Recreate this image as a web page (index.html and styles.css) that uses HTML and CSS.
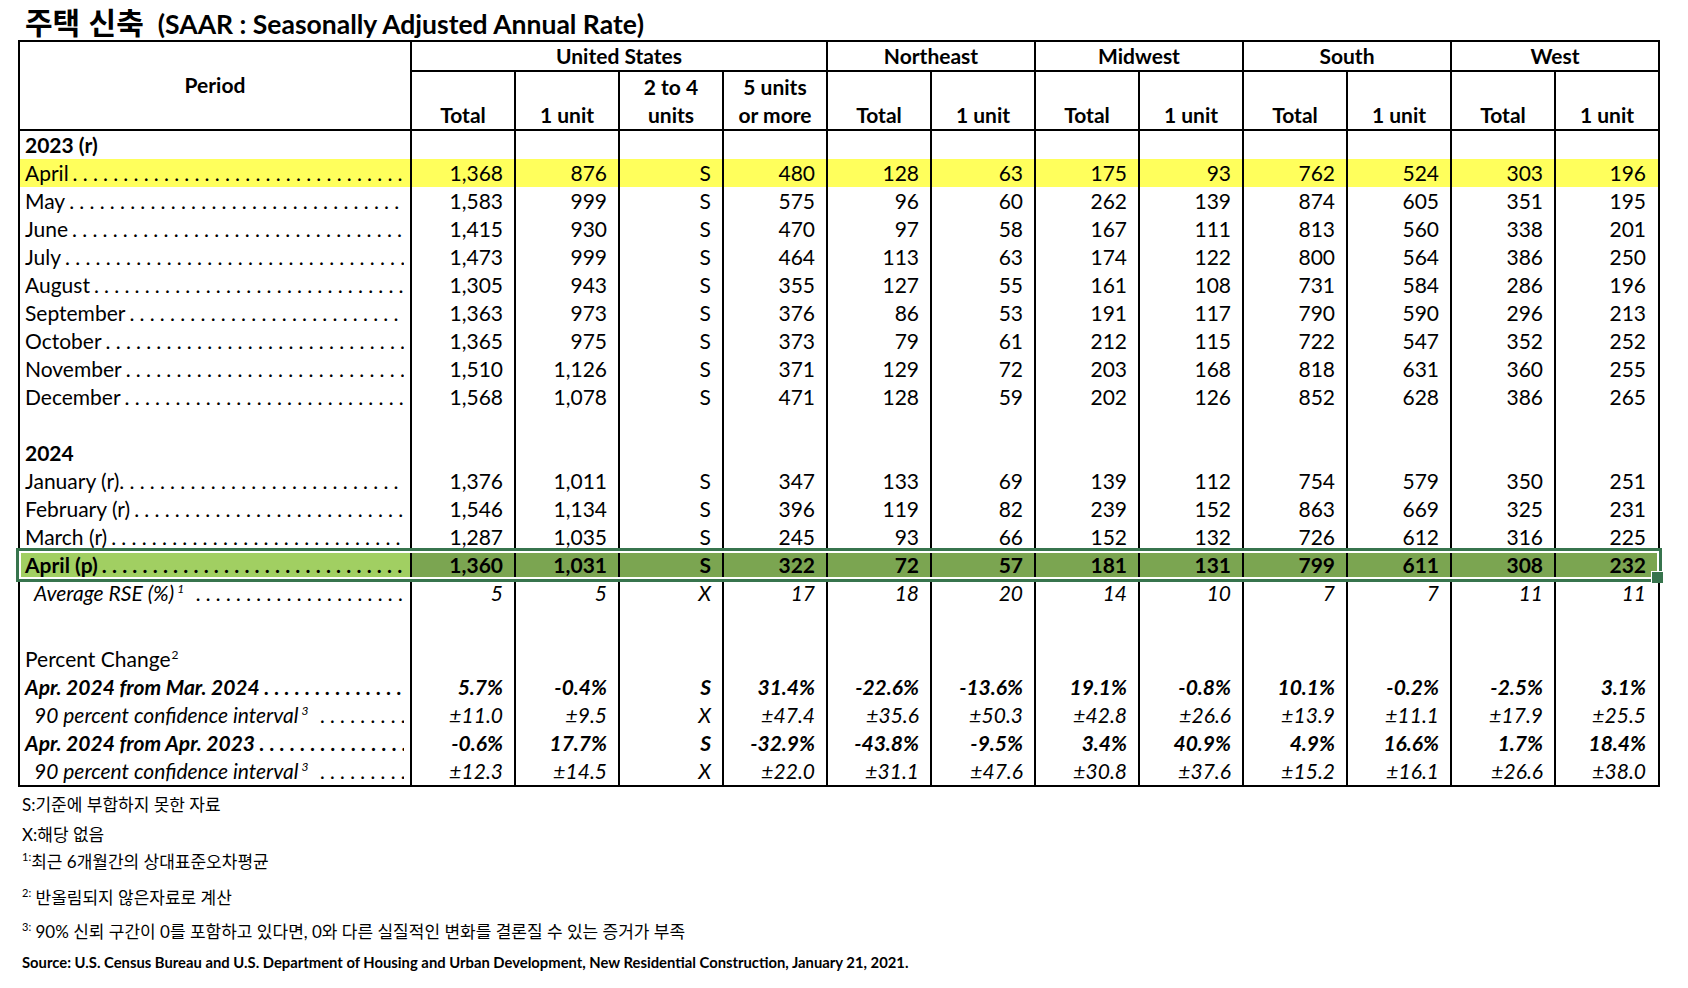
FILE: index.html
```html
<!DOCTYPE html>
<html lang="ko">
<head>
<meta charset="utf-8">
<title>주택 신축</title>
<link rel="stylesheet" href="styles.css">
</head>
<body>
<div class="page">
  <div class="title"><span class="ko">주택 신축</span><span class="en">(SAAR : Seasonally Adjusted Annual Rate)</span></div>

  <div class="sheet">
    <div class="head">
      <div class="period">Period</div>
      <div class="grp g4">United States</div>
      <div class="grp g2">Northeast</div>
      <div class="grp g2">Midwest</div>
      <div class="grp g2">South</div>
      <div class="grp g2 last">West</div>
      <div class="sub">Total</div>
      <div class="sub">1 unit</div>
      <div class="sub">2 to 4<br>units</div>
      <div class="sub">5 units<br>or more</div>
      <div class="sub">Total</div>
      <div class="sub">1 unit</div>
      <div class="sub">Total</div>
      <div class="sub">1 unit</div>
      <div class="sub">Total</div>
      <div class="sub">1 unit</div>
      <div class="sub">Total</div>
      <div class="sub last">1 unit</div>
    </div>

    <div class="row"><div class="lab b">2023 (r)</div><div></div><div></div><div></div><div></div><div></div><div></div><div></div><div></div><div></div><div></div><div></div><div></div></div>
    <div class="row hl"><div class="lab"><span>April</span><span class="dots">............................................................</span></div><div>1,368</div><div>876</div><div>S</div><div>480</div><div>128</div><div>63</div><div>175</div><div>93</div><div>762</div><div>524</div><div>303</div><div>196</div></div>
    <div class="row"><div class="lab"><span>May</span><span class="dots">............................................................</span></div><div>1,583</div><div>999</div><div>S</div><div>575</div><div>96</div><div>60</div><div>262</div><div>139</div><div>874</div><div>605</div><div>351</div><div>195</div></div>
    <div class="row"><div class="lab"><span>June</span><span class="dots">............................................................</span></div><div>1,415</div><div>930</div><div>S</div><div>470</div><div>97</div><div>58</div><div>167</div><div>111</div><div>813</div><div>560</div><div>338</div><div>201</div></div>
    <div class="row"><div class="lab"><span>July</span><span class="dots">............................................................</span></div><div>1,473</div><div>999</div><div>S</div><div>464</div><div>113</div><div>63</div><div>174</div><div>122</div><div>800</div><div>564</div><div>386</div><div>250</div></div>
    <div class="row"><div class="lab"><span>August</span><span class="dots">............................................................</span></div><div>1,305</div><div>943</div><div>S</div><div>355</div><div>127</div><div>55</div><div>161</div><div>108</div><div>731</div><div>584</div><div>286</div><div>196</div></div>
    <div class="row"><div class="lab"><span>September</span><span class="dots">............................................................</span></div><div>1,363</div><div>973</div><div>S</div><div>376</div><div>86</div><div>53</div><div>191</div><div>117</div><div>790</div><div>590</div><div>296</div><div>213</div></div>
    <div class="row"><div class="lab"><span>October</span><span class="dots">............................................................</span></div><div>1,365</div><div>975</div><div>S</div><div>373</div><div>79</div><div>61</div><div>212</div><div>115</div><div>722</div><div>547</div><div>352</div><div>252</div></div>
    <div class="row"><div class="lab"><span>November</span><span class="dots">............................................................</span></div><div>1,510</div><div>1,126</div><div>S</div><div>371</div><div>129</div><div>72</div><div>203</div><div>168</div><div>818</div><div>631</div><div>360</div><div>255</div></div>
    <div class="row"><div class="lab"><span>December</span><span class="dots">............................................................</span></div><div>1,568</div><div>1,078</div><div>S</div><div>471</div><div>128</div><div>59</div><div>202</div><div>126</div><div>852</div><div>628</div><div>386</div><div>265</div></div>
    <div class="row"><div class="lab"></div><div></div><div></div><div></div><div></div><div></div><div></div><div></div><div></div><div></div><div></div><div></div><div></div></div>
    <div class="row"><div class="lab b">2024</div><div></div><div></div><div></div><div></div><div></div><div></div><div></div><div></div><div></div><div></div><div></div><div></div></div>
    <div class="row"><div class="lab"><span>January (r)</span><span class="dots tight">............................................................</span></div><div>1,376</div><div>1,011</div><div>S</div><div>347</div><div>133</div><div>69</div><div>139</div><div>112</div><div>754</div><div>579</div><div>350</div><div>251</div></div>
    <div class="row"><div class="lab"><span>February (r)</span><span class="dots">............................................................</span></div><div>1,546</div><div>1,134</div><div>S</div><div>396</div><div>119</div><div>82</div><div>239</div><div>152</div><div>863</div><div>669</div><div>325</div><div>231</div></div>
    <div class="row"><div class="lab"><span>March (r)</span><span class="dots">............................................................</span></div><div>1,287</div><div>1,035</div><div>S</div><div>245</div><div>93</div><div>66</div><div>152</div><div>132</div><div>726</div><div>612</div><div>316</div><div>225</div></div>
    <div class="row sel"><div class="lab"><span>April (p)</span><span class="dots">............................................................</span></div><div>1,360</div><div>1,031</div><div>S</div><div>322</div><div>72</div><div>57</div><div>181</div><div>131</div><div>799</div><div>611</div><div>308</div><div>232</div></div>
    <div class="row it"><div class="lab ind"><span>Average RSE (%)<sup class="sup">1</sup></span><span class="dots wide">............................................................</span></div><div>5</div><div>5</div><div>X</div><div>17</div><div>18</div><div>20</div><div>14</div><div>10</div><div>7</div><div>7</div><div>11</div><div>11</div></div>
    <div class="row tall"><div class="lab"></div><div></div><div></div><div></div><div></div><div></div><div></div><div></div><div></div><div></div><div></div><div></div><div></div></div>
    <div class="row"><div class="lab"><span>Percent Change<sup class="sup tight">2</sup></span></div><div></div><div></div><div></div><div></div><div></div><div></div><div></div><div></div><div></div><div></div><div></div><div></div></div>
    <div class="row bi"><div class="lab"><span>Apr. 2024 from Mar. 2024</span><span class="dots">............................................................</span></div><div>5.7%</div><div>-0.4%</div><div>S</div><div>31.4%</div><div>-22.6%</div><div>-13.6%</div><div>19.1%</div><div>-0.8%</div><div>10.1%</div><div>-0.2%</div><div>-2.5%</div><div>3.1%</div></div>
    <div class="row it"><div class="lab ind"><span>90 percent confidence interval<sup class="sup">3</sup></span><span class="dots wide">............................................................</span></div><div>±11.0</div><div>±9.5</div><div>X</div><div>±47.4</div><div>±35.6</div><div>±50.3</div><div>±42.8</div><div>±26.6</div><div>±13.9</div><div>±11.1</div><div>±17.9</div><div>±25.5</div></div>
    <div class="row bi"><div class="lab"><span>Apr. 2024 from Apr. 2023</span><span class="dots">............................................................</span></div><div>-0.6%</div><div>17.7%</div><div>S</div><div>-32.9%</div><div>-43.8%</div><div>-9.5%</div><div>3.4%</div><div>40.9%</div><div>4.9%</div><div>16.6%</div><div>1.7%</div><div>18.4%</div></div>
    <div class="row it"><div class="lab ind"><span>90 percent confidence interval<sup class="sup">3</sup></span><span class="dots wide">............................................................</span></div><div>±12.3</div><div>±14.5</div><div>X</div><div>±22.0</div><div>±31.1</div><div>±47.6</div><div>±30.8</div><div>±37.6</div><div>±15.2</div><div>±16.1</div><div>±26.6</div><div>±38.0</div></div>

    <div class="selbox"></div>
    <div class="handle"></div>
  </div>

  <div class="notes">
    <div class="note n1">S:기준에 부합하지 못한 자료</div>
    <div class="note n2">X:해당 없음</div>
    <div class="note n3"><sup class="fs">1:</sup>최근 6개월간의 상대표준오차평균</div>
    <div class="note n4"><sup class="fs">2:</sup> 반올림되지 않은자료로 계산</div>
    <div class="note n5"><sup class="fs">3:</sup> 90% 신뢰 구간이 0를 포함하고 있다면, 0와 다른 실질적인 변화를 결론질 수 있는 증거가 부족</div>
    <div class="note n6">Source: U.S. Census Bureau and U.S. Department of Housing and Urban Development, New Residential Construction, January 21, 2021.</div>
  </div>
</div>
</body>
</html>
```

FILE: styles.css
```css
html, body {
  margin: 0;
  padding: 0;
  background: #ffffff;
}

body {
  color: #000000;
  font-family: Lato, "Noto Sans CJK KR", sans-serif;
  font-size: 21px;
}

.page {
  padding-left: 18px;
  width: 1642px;
}

.title {
  height: 40px;
  padding-left: 7px;
  line-height: 42px;
  white-space: nowrap;
  font-weight: 700;
}

.title .ko {
  font-family: "Noto Sans CJK KR", sans-serif;
  font-size: 30px;
  font-weight: 700;
}

.title .en {
  font-size: 26.5px;
  margin-left: 14px;
}

.sheet {
  position: relative;
  width: 1642px;
  box-sizing: border-box;
  border: 2px solid #000000;
}

.head,
.row {
  display: grid;
  grid-template-columns: 392px repeat(11, 104px) 102px;
}

.head {
  grid-template-rows: 30px 59px;
  font-weight: 700;
}

.head > div {
  display: flex;
  justify-content: center;
  box-sizing: border-box;
  border-right: 2px solid #000000;
  border-bottom: 2px solid #000000;
  text-align: center;
}

.head .period {
  grid-row: 1 / span 2;
  align-items: center;
  padding-bottom: 2px;
}

.head .grp {
  align-items: center;
  line-height: 28px;
}

.head .g4 { grid-column: span 4; }
.head .g2 { grid-column: span 2; }

.head .sub {
  align-items: flex-end;
  line-height: 28px;
}

.head .last { border-right: 0; }

.row {
  height: 28px;
  line-height: 28px;
}

.row.tall { height: 38px; }

.row > div {
  box-sizing: border-box;
  border-right: 2px solid #000000;
  padding-right: 11px;
  text-align: right;
  white-space: nowrap;
  overflow: hidden;
}

.row > div:last-child {
  border-right: 0;
  padding-right: 12px;
}

.row > .lab {
  display: flex;
  text-align: left;
  padding: 0 6px 0 5px;
}

.lab.b { font-weight: 700; }
.lab.ind { padding-left: 14px; }

.lab .dots {
  flex: 1;
  min-width: 0;
  overflow: hidden;
  margin-left: 4px;
  letter-spacing: 5.2px;
}

.lab .dots.tight { margin-left: 0; }
.lab .dots.wide { margin-left: 12px; }

.row.hl { background: #ffff5c; }

.row.sel { font-weight: 700; }
.row.sel > div { background: #7ba551; }
.row.sel > .lab { background: #a1cf62; }

.row.it { font-style: italic; }
.row.bi { font-style: italic; font-weight: 700; }
.row.bi .lab .dots { font-style: normal; }

.sup {
  font-size: 12px;
  line-height: 0;
  vertical-align: 8px;
  margin-left: 3px;
  font-weight: 400;
}

.sup.tight { margin-left: 1px; }

.selbox {
  position: absolute;
  left: -4px;
  top: 506px;
  width: 1646px;
  height: 34px;
  box-sizing: border-box;
  border: 3px solid #37744d;
  box-shadow: inset 0 0 0 2px #ffffff;
  pointer-events: none;
}

.handle {
  position: absolute;
  left: 1631px;
  top: 529px;
  width: 11px;
  height: 11px;
  background: #37744d;
  border-top: 1px solid #ffffff;
  border-left: 1px solid #ffffff;
}

.notes {
  padding-left: 4px;
  font-size: 17px;
}

.note {
  height: 26px;
  line-height: 26px;
  white-space: nowrap;
}

.n1 { margin-top: 5px; }
.n2 { margin-top: 4px; }
.n3 { margin-top: 1px; }
.n4 { margin-top: 10px; }
.n5 { margin-top: 8px; }
.n6 {
  margin-top: 4px;
  font-size: 14.8px;
  font-weight: 700;
}

.fs {
  font-size: 11px;
  line-height: 0;
  vertical-align: 7px;
}
```
